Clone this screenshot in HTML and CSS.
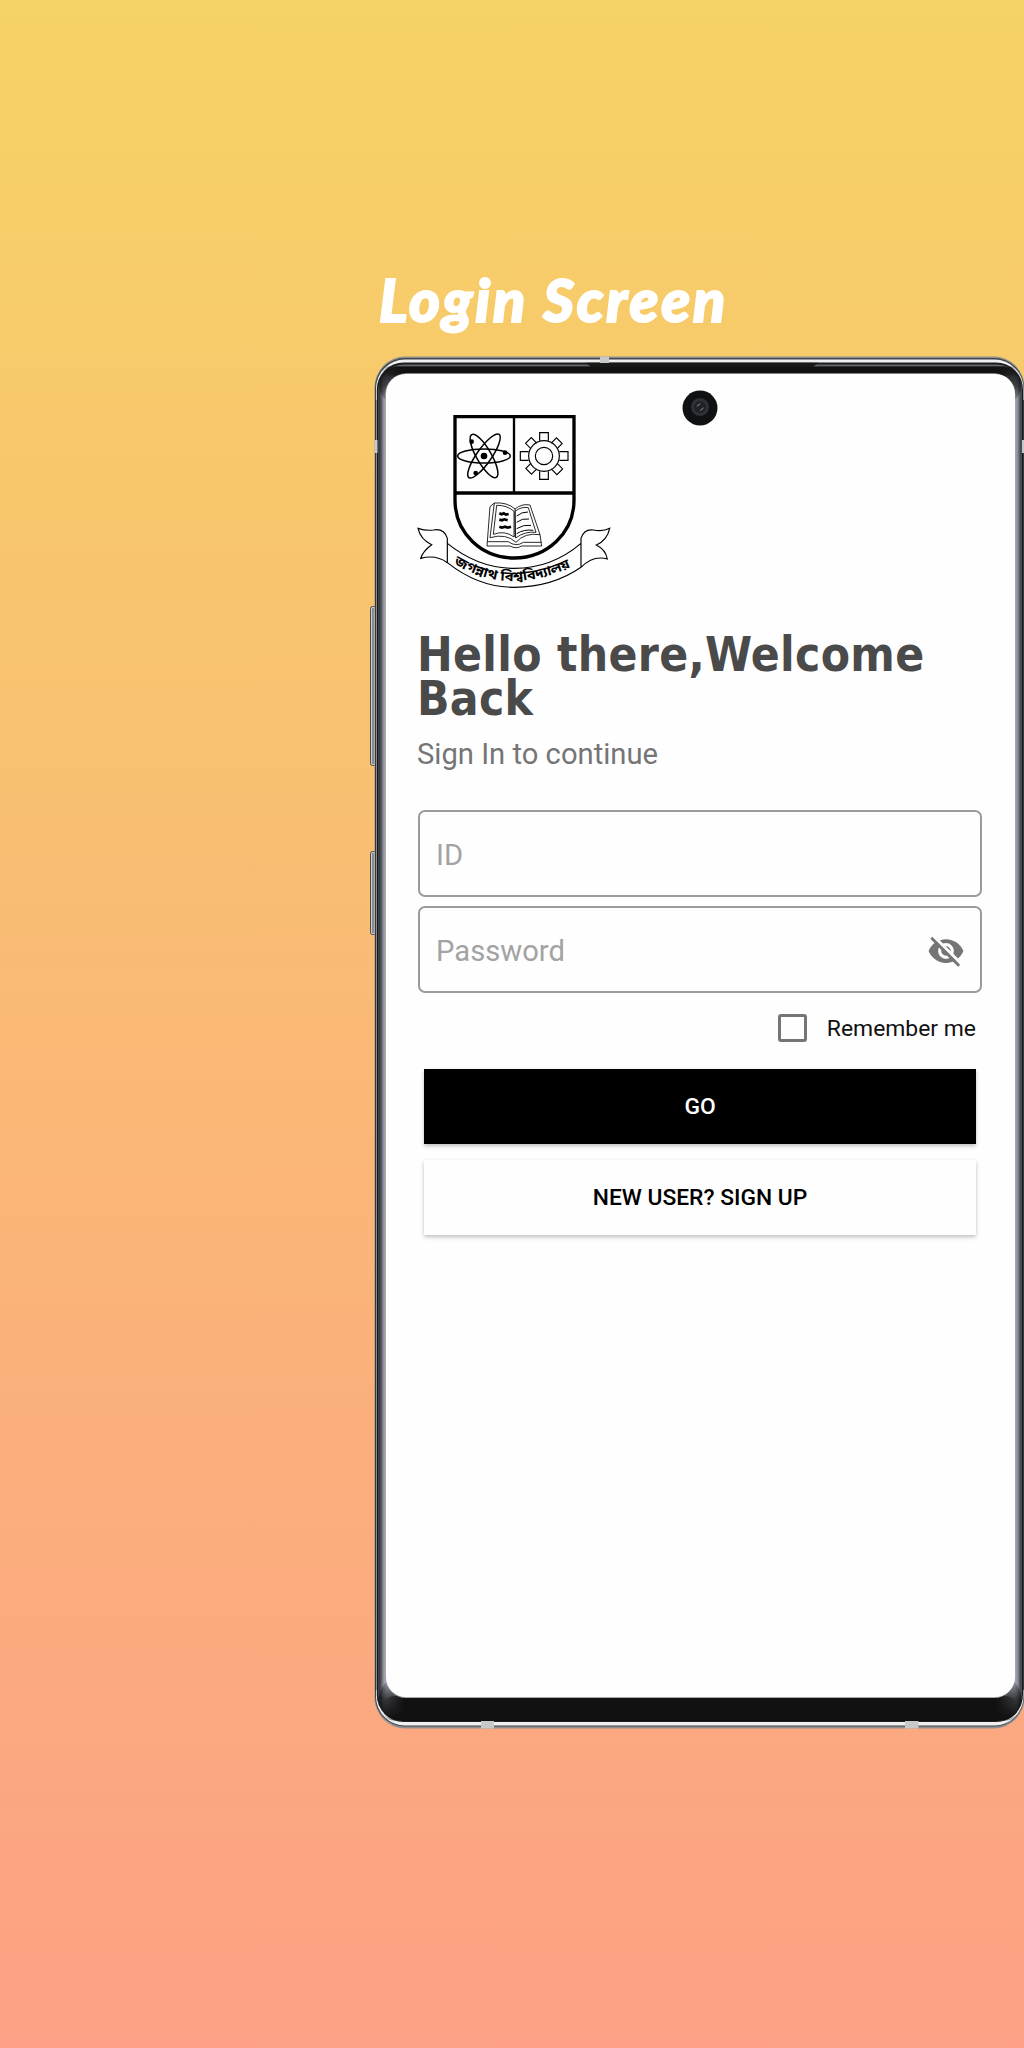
FILE: index.html
```html
<!DOCTYPE html>
<html lang="en">
<head>
<meta charset="utf-8">
<title>Login Screen</title>
<link rel="stylesheet" href="styles.css">
</head>
<body>
<main class="page">
  <h1 class="title">Login Screen</h1>
  <section class="phone">
    <svg class="frame" viewBox="370 356 654 1374" aria-hidden="true">
      <defs>
        <linearGradient id="side" gradientUnits="userSpaceOnUse" x1="379" y1="0" x2="1022" y2="0">
          <stop offset="0" stop-color="#303136"/><stop offset=".004" stop-color="#5d6069"/>
          <stop offset=".007" stop-color="#8f929e"/><stop offset=".012" stop-color="#b9bcca"/>
          <stop offset=".988" stop-color="#adb2bd"/><stop offset=".993" stop-color="#8b909a"/>
          <stop offset=".997" stop-color="#50545b"/><stop offset="1" stop-color="#26272a"/>
        </linearGradient>
        <linearGradient id="cap" x1="0" x2="1" y1="0" y2="0">
          <stop offset="0" stop-color="#111" stop-opacity="0"/><stop offset=".035" stop-color="#111"/>
          <stop offset=".965" stop-color="#111"/><stop offset="1" stop-color="#111" stop-opacity="0"/>
        </linearGradient>
        <linearGradient id="fadeT" x1="0" x2="0" y1="0" y2="1">
          <stop offset="0" stop-color="#141415"/><stop offset=".5" stop-color="#141415" stop-opacity=".7"/><stop offset="1" stop-color="#141415" stop-opacity="0"/>
        </linearGradient>
        <linearGradient id="fadeB" x1="0" x2="0" y1="1" y2="0">
          <stop offset="0" stop-color="#0c0c0d"/><stop offset=".5" stop-color="#0c0c0d" stop-opacity=".7"/><stop offset="1" stop-color="#0c0c0d" stop-opacity="0"/>
        </linearGradient>
        <radialGradient id="lens"><stop offset="0" stop-color="#55565e"/><stop offset=".45" stop-color="#23242a"/><stop offset=".8" stop-color="#33343e"/><stop offset="1" stop-color="#08080a"/></radialGradient>
      </defs>
      <g fill="#c9cbcb" stroke="#4b4d4e" stroke-width="1">
        <rect x="370.500" y="606.500" width="6" height="159" rx="2"/>
        <rect x="370.500" y="851.500" width="6" height="83" rx="2"/>
        <path d="M373 608v156M373 853v80"/>
      </g>
      <rect x="374.500" y="356.500" width="650" height="1372" rx="31" fill="#8d8f90"/>
      <rect x="375" y="358" width="649" height="1368.500" rx="30" fill="#43454a"/>
      <rect x="376" y="359.500" width="647.500" height="1366" rx="29" fill="#f0f0f0"/>
      <rect x="376.800" y="362.500" width="646.200" height="1359.500" rx="27" fill="#1b1c1e"/>
      <rect x="378.500" y="364.500" width="643.500" height="1355" rx="25" fill="#62676a"/>
      <rect x="379" y="366.500" width="642.500" height="1354.500" rx="24" fill="url(#side)"/>
      <rect x="379" y="366.500" width="642.500" height="38" rx="20" fill="url(#fadeT)"/>
      <rect x="379" y="1676" width="642.500" height="45" rx="23" fill="url(#fadeB)"/>
      <rect x="381" y="366.500" width="638" height="9" rx="8" fill="url(#cap)"/>
      <rect x="382" y="1696" width="636" height="24.500" rx="12" fill="url(#cap)"/>
      <path d="M586 362.800H818L813 367H591Z" fill="#171819"/>
      <path d="M375.700 400V1690M1023.700 400V1690" stroke="#36383a" stroke-width="1.400"/>
      <rect x="385.300" y="373.300" width="629.800" height="1324.700" rx="21" fill="#a7a8a9"/>
      <g fill="#c7c8c8">
        <rect x="600" y="356.500" width="9" height="6.500"/><rect x="481" y="1721" width="13" height="7.500"/>
        <rect x="905" y="1721" width="13.500" height="7.500"/><rect x="374.500" y="440" width="3" height="13"/><rect x="1022" y="440" width="2" height="13"/>
      </g>
    </svg>
    <div class="screen">
      <svg class="camera" viewBox="0 0 36 36" aria-hidden="true">
        <circle cx="18" cy="18" r="17.500" fill="#101112"/><circle cx="18" cy="17" r="10" fill="url(#lens)"/>
        <circle cx="18" cy="17" r="5.500" fill="#202126"/><path d="M14.500 17Q15.500 13.500 19 13.500L14.500 17ZM17 21L22 17Q21 20.500 17 21Z" fill="#8a8b90"/>
      </svg>
      <svg class="crest" viewBox="51 36 582 540" role="img" aria-label="University crest">
        <g fill="none" stroke="#000" stroke-width="3.500">
          <path d="M165 50H522V300C522 400 440 474 343 474C245 474 165 400 165 300Z" stroke-width="10"/>
          <path d="M165 279H522" stroke-width="10"/><path d="M342 50V278" stroke-width="7"/>
          <g stroke-width="4.500">
            <ellipse cx="252" cy="168" rx="79" ry="21"/>
            <ellipse cx="252" cy="168" rx="74" ry="22" transform="rotate(60 252 168)"/>
            <ellipse cx="252" cy="168" rx="79" ry="22" transform="rotate(-55 252 168)"/>
          </g>
          <g fill="#000" stroke="none"><circle cx="252" cy="168" r="10"/><circle cx="215" cy="125" r="7"/><circle cx="315" cy="158" r="7"/><circle cx="227" cy="219" r="7"/></g>
          <circle cx="432" cy="168" r="46"/><circle cx="432" cy="168" r="26"/>
          <path d="M419 122V98H445V122M419 214V238H445V214M386 155H361V181H386M478 155H504V181H478"/>
          <path d="M419 122V98H445V122M419 214V238H445V214M386 155H361V181H386M478 155H504V181H478" transform="rotate(45 432 168) translate(432 168) scale(.93) translate(-432 -168)"/>
          <g stroke-width="2.500">
            <path d="M283 309Q322 306 345 327Q366 310 390 315L420 404Q374 397 348 427Q319 399 270 413Z"/>
            <path d="M290 316Q320 315 342 334V411Q314 390 280 403Z"/>
            <path d="M345 334Q364 319 385 323L408 397Q375 393 347 414Z"/>
            <path d="M283 309L270 320L261 438H330Q348 448 365 438H425L420 404M262 425H325Q348 442 370 427H424M345 327V411"/>
            <path d="M350 348Q366 335 384 336M350 367Q366 354 387 357M350 386Q370 373 393 376M350 401Q372 387 400 391" stroke-width="3"/>
            <path d="M298 340l7 3 6-3 7 4 8-2M298 359l8 2 7-3 10 3M298 380l8 3 9-3 8 3 10-3" stroke-width="8"/>
          </g>
          <path d="M142 430V415Q132 384 100 390Q78 393 54 385Q62 419 95 434Q69 453 62 475Q108 463 142 488M142 430Q235 505 343 505Q455 505 543 430M142 488Q237 563 343 562Q458 561 543 502M543 430V415Q552 386 580 390Q609 396 629 385Q622 420 589 435Q617 449 622 477Q580 465 543 502M543 430V502M142 430V488"/>
        </g>
        <path id="motto" d="M161 490Q250 544 343 543Q440 540 530 492" fill="none"/>
        <text class="motto"><textPath href="#motto" textLength="368" lengthAdjust="spacingAndGlyphs">জগন্নাথ বিশ্ববিদ্যালয়</textPath></text>
      </svg>
      <h2 class="greeting">Hello there,Welcome<br>Back</h2>
      <p class="subtitle">Sign In to continue</p>
      <form class="form">
        <div class="field"><span>ID</span></div>
        <div class="field"><span>Password</span>
          <svg class="eye" viewBox="0 0 24 24" aria-hidden="true">
            <defs><mask id="cut"><rect width="24" height="24" fill="#fff"/><path d="M4.500 3L21 19.500" stroke="#000" stroke-width="1.900"/></mask></defs>
            <path mask="url(#cut)" fill="#757575" fill-rule="evenodd" d="M12 4.500C7 4.500 2.730 7.610 1 12c1.730 4.390 6 7.500 11 7.500s9.270-3.110 11-7.500c-1.730-4.390-6-7.500-11-7.500zM12 17a5 5 0 1 1 0-10a5 5 0 0 1 0 10zM12 9a3 3 0 1 0 0 6a3 3 0 0 0 0-6z"/>
            <path d="M2.700 3.700L20.300 21.300" stroke="#757575" stroke-width="1.800"/>
          </svg>
        </div>
        <label class="remember"><i class="box"></i><span>Remember me</span></label>
        <div class="btn dark">GO</div>
        <div class="btn light">NEW USER? SIGN UP</div>
      </form>
    </div>
  </section>
</main>
</body>
</html>
```

FILE: styles.css
```css
* { box-sizing: border-box; }
body { margin: 0; }
.page {
  width: 1024px;
  height: 2048px;
  padding: 264px 0 0 370px;
  overflow: hidden;
  background: linear-gradient(#f6d365, #fda085);
  font-family: Roboto, sans-serif;
}
.title {
  margin: 0;
  height: 92px;
  padding-left: 9px;
  font: italic 900 59px/72px Lato, sans-serif;
  letter-spacing: 2.800px;
  -webkit-text-stroke: 2px #fff;
  color: #fff;
  white-space: nowrap;
}
.phone {
  position: relative;
  width: 654px;
  height: 1374px;
  padding: 18px 9px 0 16px;
}
.frame { position: absolute; left: 0; top: 0; width: 654px; height: 1374px; }
.screen {
  position: relative;
  height: 1323px;
  padding: 38px 32px 0;
  border-radius: 20px;
  background: #fefefe;
}
.camera { position: absolute; left: 296px; top: 15.500px; width: 36px; height: 36px; }
.crest { display: block; width: 194px; height: 180px; margin-left: -1px; }
.motto { font: bold 40px "Noto Sans Bengali", "Lohit Bengali", FreeSans, sans-serif; }
.greeting {
  margin: 41px 0 0 -1px;
  font: bold 47.500px/43.700px "DejaVu Sans Condensed", "DejaVu Sans", sans-serif;
  letter-spacing: .3px;
  color: #4a4a4a;
  white-space: nowrap;
}
.subtitle { margin: 14px 0 0 -1px; font-size: 29.200px; line-height: 40px; color: #757575; }
.form { display: flex; flex-direction: column; margin: 36px 0 0; width: 564px; }
.field {
  display: flex;
  align-items: center;
  justify-content: space-between;
  height: 87px;
  margin-bottom: 9px;
  padding: 2px 15px 0 16px;
  border: 2px solid #9b9b9b;
  border-radius: 7px;
  font-size: 29.200px;
  color: #a3a3a3;
}
.eye { width: 38px; height: 38px; }
.remember { display: flex; align-items: center; justify-content: flex-end; gap: 20px; height: 52px; padding-right: 6px; font-size: 22.900px; color: #111; }
.box { width: 29px; height: 28px; border: 3px solid #757575; border-radius: 3px; }
.btn {
  display: flex;
  align-items: center;
  justify-content: center;
  height: 75px;
  margin: 0 6px;
  font-size: 22.800px;
  font-weight: 500;
  box-shadow: 0 2px 4px rgba(0, 0, 0, .25);
}
.dark { margin-top: 15px; background: #000; color: #fff; }
.light { margin-top: 16px; background: #fefefe; color: #000; }
```
